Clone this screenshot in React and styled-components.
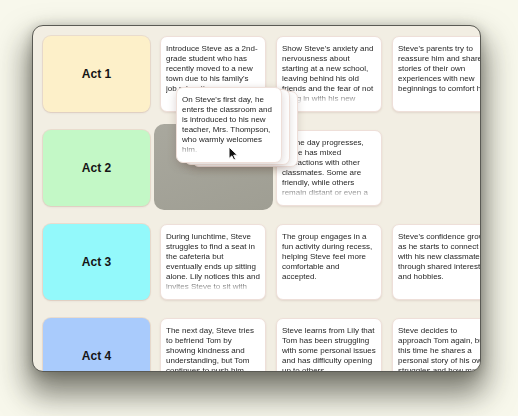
import React from 'react';
import styled, { createGlobalStyle } from 'styled-components';

const GlobalStyle = createGlobalStyle`
  html, body {
    margin: 0;
    padding: 0;
    background: #f8f8ec;
  }
  body {
    font-family: "Liberation Sans", Arial, sans-serif;
  }
`;

const rows = [
    {
        act: 'Act 1',
        color: '#fdf0c9',
        beats: [
            "Introduce Steve as a 2nd-grade student who has recently moved to a new town due to his family's job relocation.",
            "Show Steve's anxiety and nervousness about starting at a new school, leaving behind his old friends and the fear of not fitting in with his new classmates.",
            "Steve's parents try to reassure him and share stories of their own experiences with new beginnings to comfort him.",
        ],
    },
    {
        act: 'Act 2',
        color: '#c3f8c6',
        beats: [
            'placeholder',
            'As the day progresses, Steve has mixed interactions with other classmates. Some are friendly, while others remain distant or even a bit unkind.',
            null,
        ],
    },
    {
        act: 'Act 3',
        color: '#93f9fb',
        beats: [
            'During lunchtime, Steve struggles to find a seat in the cafeteria but eventually ends up sitting alone. Lily notices this and invites Steve to sit with her.',
            'The group engages in a fun activity during recess, helping Steve feel more comfortable and accepted.',
            "Steve's confidence grows as he starts to connect with his new classmates through shared interests and hobbies.",
        ],
    },
    {
        act: 'Act 4',
        color: '#a9cbfc',
        beats: [
            'The next day, Steve tries to befriend Tom by showing kindness and understanding, but Tom continues to push him away.',
            'Steve learns from Lily that Tom has been struggling with some personal issues and has difficulty opening up to others.',
            'Steve decides to approach Tom again, but this time he shares a personal story of his own struggles and how moving was hard.',
        ],
    },
];

const dragged = "On Steve's first day, he enters the classroom and is introduced to his new teacher, Mrs. Thompson, who warmly welcomes him.";

const App = () => {
    return (
        <>
            <GlobalStyle />
            <Page>
                <Window>
                    <Board>
                        {rows.map(row => (
                            <React.Fragment key={row.act}>
                                <ActCard color={row.color}>{row.act}</ActCard>
                                {row.beats.map((beat, i) => {
                                    if (beat === 'placeholder') return <DropSlot key={i} />
                                    if (!beat) return <div key={i} />
                                    return (
                                        <BeatCard key={i}>
                                            <BeatText>{beat}</BeatText>
                                        </BeatCard>
                                    )
                                })}
                            </React.Fragment>
                        ))}
                    </Board>

                    {/* card being dragged, floats over the board */}
                    <DragStack>
                        <GhostCard offset={16} drop={4}>
                            <BeatText>{dragged}</BeatText>
                        </GhostCard>
                        <GhostCard offset={8} drop={2}>
                            <BeatText>{dragged}</BeatText>
                        </GhostCard>
                        <DragCard>
                            <BeatText>{dragged}</BeatText>
                        </DragCard>
                        <Cursor width="11" height="15" viewBox="0 0 11 15">
                            <path d="M1 1 L1 12.5 L3.8 9.9 L5.8 14 L7.6 13.2 L5.7 9.2 L9.5 9.2 Z" fill="#111" stroke="#fff" strokeWidth="1" strokeLinejoin="round" />
                        </Cursor>
                    </DragStack>
                </Window>
            </Page>
        </>
    )
}

const Page = styled.div`
    width: 518px;
    height: 416px;
    padding: 25px 0 0 32px;
    box-sizing: border-box;
    overflow: hidden;
`

const Window = styled.div`
    position: relative;
    width: 449px;
    height: 347px;
    box-sizing: border-box;
    border: 1px solid #5a5a54;
    border-radius: 11px;
    background: #f2eee3;
    overflow: hidden;
    box-shadow: 0 18px 30px 5px rgba(30, 30, 20, 0.55), 0 2px 12px rgba(30, 30, 20, 0.25);
`

const Board = styled.div`
    display: grid;
    grid-template-columns: 107px repeat(3, 106px);
    grid-auto-rows: 76px;
    column-gap: 10px;
    row-gap: 18px;
    padding: 10px;
    width: max-content;
`

const ActCard = styled.div`
    display: flex;
    align-items: center;
    justify-content: center;
    border-radius: 8px;
    background: ${props => props.color};
    box-shadow: 0 0 0 1px rgba(210, 170, 150, 0.25), 0 1px 2px rgba(120, 90, 80, 0.15);
    font-size: 12px;
    font-weight: bold;
    color: #151515;
`

const BeatCard = styled.div`
    box-sizing: border-box;
    background: #fff;
    border: 1px solid #eedfd9;
    border-radius: 7px;
    padding: 7px 5px;
    box-shadow: 0 1px 2px rgba(150, 110, 100, 0.18);
    overflow: hidden;
`

const BeatText = styled.div`
    font-size: 8px;
    line-height: 10px;
    color: #262626;
    height: 60px;
    overflow: hidden;
    -webkit-mask-image: linear-gradient(to bottom, #000 49px, rgba(0,0,0,0.15) 58px);
    mask-image: linear-gradient(to bottom, #000 49px, rgba(0,0,0,0.15) 58px);
`

const DropSlot = styled.div`
    margin: -6px -7px -4px -6px;
    border-radius: 10px;
    background: linear-gradient(160deg, #a9a89e, #9f9e93);
`

const DragStack = styled.div`
    position: absolute;
    left: 143px;
    top: 61px;
    width: 106px;
    height: 76px;
`

const DragCard = styled(BeatCard)`
    position: absolute;
    inset: 0;
    box-shadow: 0 3px 10px rgba(90, 60, 50, 0.22);
`

const GhostCard = styled(BeatCard)`
    position: absolute;
    left: ${props => props.offset}px;
    top: ${props => props.drop}px;
    width: 106px;
    height: 76px;
    box-shadow: 0 3px 8px rgba(90, 60, 50, 0.18);
`

const Cursor = styled.svg`
    position: absolute;
    left: 52px;
    top: 59px;
`

export default App
